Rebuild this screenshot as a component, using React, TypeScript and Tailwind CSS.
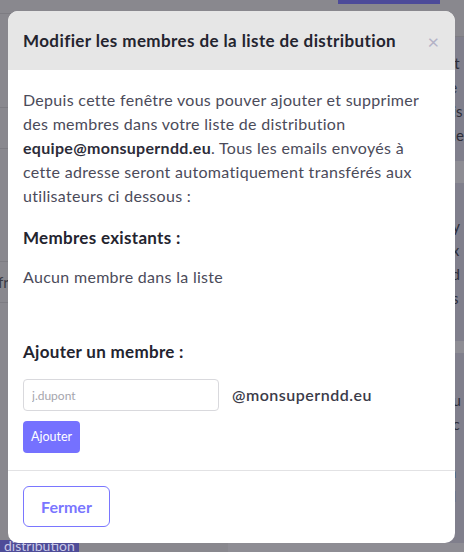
import React from "react";

const font = { fontFamily: "Lato, 'Noto Sans', sans-serif" };

function Background() {
  return (
    <div className="flex h-[552px] w-[464px] bg-[#89888e]">
      <div className="flex w-[232px] flex-col">
        <div className="h-[14px] border-b border-[#7d7c82]" />
        <div className="h-[94px] border-b border-[#7d7c82]" />
        <div className="h-[41px] border-b border-[#7d7c82]" />
        <div className="h-[113px] border-b border-[#7d7c82]" />
        <div className="flex h-[41px] items-center border-b border-[#7d7c82] text-[15px] text-[#3a3a44]">
          <span className="ml-[-2px]">fr</span>
        </div>
        <div className="flex-1" />
        <div className="flex">
          <span className="bg-[#4e4c98] px-1 text-[14px] leading-[12px] text-[#c9c8e6]">distribution</span>
        </div>
      </div>
      <div className="flex flex-1 flex-col">
        <div className="flex h-[37px] justify-end border-b border-[#7d7c82]">
          <div className="mr-[24px] h-[4px] w-[102px] bg-[#4d4b99]" />
        </div>
        <div className="flex h-[124px] flex-col justify-center bg-[#807f8c] pl-[216px] text-[15px] leading-[24px] text-[#2d2d38]">
          <span>ist</span>
          <span>re</span>
          <span>uis</span>
          <span>ole</span>
        </div>
        <div className="h-[22px] bg-[#8e8d94]" />
        <div className="flex h-[158px] flex-col justify-center bg-[#807f8c] pl-[216px] text-[15px] leading-[24px] text-[#2d2d38]">
          <span>oy</span>
          <span>ex</span>
          <span>ad</span>
          <span>es</span>
        </div>
        <div className="h-[12px] bg-[#8e8d94]" />
        <div className="flex flex-1 flex-col justify-center bg-[#807f8c] pl-[216px] text-[15px] leading-[24px] text-[#2d2d38]">
          <span>ou</span>
          <span>nc</span>
          <span>si</span>
          <span>in</span>
          <span className="text-[#4a2a2a]">fil</span>
        </div>
        <div className="h-[9px] bg-[#8e8d94]" />
      </div>
    </div>
  );
}

export default function App() {
  return (
    <div className="relative h-[552px] w-[464px] overflow-hidden" style={font}>
      <Background />
      <div className="absolute left-[8px] top-[11px] flex w-[447px] flex-col overflow-hidden rounded-[10px] bg-white">
        <div className="flex h-[59px] items-center justify-between bg-[#e6e6e6] pl-[15px] pr-[16px]">
          <h2 className="text-[17px] font-bold tracking-[0.4px] text-[#24242f]">
            Modifier les membres de la liste de distribution
          </h2>
          <span className="text-[20px] leading-none text-[#b3b2c6]">×</span>
        </div>
        <div className="flex flex-col px-[15px] pb-[17px] pt-[18px] text-[16px] leading-[24px] tracking-[0.3px] text-[#4b4b5a]">
          <p className="pr-[10px]">
            Depuis cette fenêtre vous pouver ajouter et supprimer des membres dans votre liste de distribution{" "}
            <b className="font-bold text-[#2c2c39]">equipe@monsuperndd.eu</b>. Tous les emails envoyés à cette
            adresse seront automatiquement transférés aux utilisateurs ci dessous :
          </p>
          <h3 className="mt-[18px] text-[17px] font-bold tracking-[0.3px] text-[#24242f]">Membres existants :</h3>
          <p className="mt-[15px]">Aucun membre dans la liste</p>
          <h3 className="mt-[51px] text-[17px] font-bold tracking-[0.3px] text-[#24242f]">Ajouter un membre :</h3>
          <div className="mt-[15px] flex items-center gap-[13px]">
            <input
              placeholder="j.dupont"
              className="h-[32px] w-[196px] rounded-[4px] border border-[#d9d9dd] px-[8px] text-[12px] tracking-normal text-[#333] placeholder:text-[#a5a5ad] outline-none"
            />
            <span className="text-[16px] font-semibold tracking-[0.5px] text-[#3b3b49]">@monsuperndd.eu</span>
          </div>
          <div className="mt-[10px] flex">
            <button className="h-[32px] w-[57px] rounded-[4px] bg-[#7571ff] text-[12.5px] tracking-normal text-white">Ajouter</button>
          </div>
        </div>
        <div className="border-t border-[#e2e2e4] px-[15px] pb-[16px] pt-[15px]">
          <button className="h-[41px] w-[87px] rounded-[6px] border border-[#7a76ff] text-[16px] font-bold text-[#7a76ff]">
            Fermer
          </button>
        </div>
      </div>
    </div>
  );
}
